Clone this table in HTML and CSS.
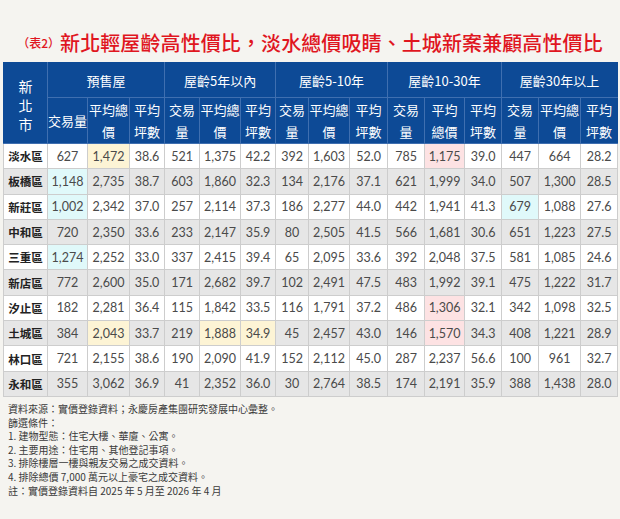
FILE: index.html
```html
<!DOCTYPE html>
<html lang="zh-Hant">
<head>
<meta charset="utf-8">
<link rel="stylesheet" href="styles.css">
</head>
<body>
<div class="page">
  <h1 class="title"><span class="tag">（表2）</span><span class="main">新北輕屋齡高性價比，淡水總價吸睛、土城新案兼顧高性價比</span></h1>
  <table class="grid">
    <colgroup>
      <col class="w44"><col class="w40"><col class="w42"><col class="w35">
      <col class="w35"><col class="w41"><col class="w35">
      <col class="w33"><col class="w41"><col class="w38">
      <col class="w37"><col class="w40"><col class="w37">
      <col class="w37"><col class="w42"><col class="w37">
    </colgroup>
    <thead>
      <tr class="grp">
        <th rowspan="2" class="city">新<br>北<br>市</th>
        <th colspan="3">預售屋</th>
        <th colspan="3">屋齡5年以內</th>
        <th colspan="3">屋齡5-10年</th>
        <th colspan="3">屋齡10-30年</th>
        <th colspan="3">屋齡30年以上</th>
      </tr>
      <tr class="sub">
        <th>交易量</th><th>平均總<br>價</th><th>平均<br>坪數</th>
        <th>交易<br>量</th><th>平均總<br>價</th><th>平均<br>坪數</th>
        <th>交易<br>量</th><th>平均總<br>價</th><th>平均<br>坪數</th>
        <th>交易<br>量</th><th>平均<br>總價</th><th>平均<br>坪數</th>
        <th>交易<br>量</th><th>平均總<br>價</th><th>平均<br>坪數</th>
      </tr>
    </thead>
    <tbody>
      <tr><th>淡水區</th><td>627</td><td class="y">1,472</td><td>38.6</td><td>521</td><td>1,375</td><td>42.2</td><td>392</td><td>1,603</td><td>52.0</td><td>785</td><td class="p">1,175</td><td>39.0</td><td>447</td><td>664</td><td>28.2</td></tr>
      <tr><th>板橋區</th><td class="c">1,148</td><td>2,735</td><td>38.7</td><td>603</td><td>1,860</td><td>32.3</td><td>134</td><td>2,176</td><td>37.1</td><td>621</td><td>1,999</td><td>34.0</td><td>507</td><td>1,300</td><td>28.5</td></tr>
      <tr><th>新莊區</th><td class="c">1,002</td><td>2,342</td><td>37.0</td><td>257</td><td>2,114</td><td>37.3</td><td>186</td><td>2,277</td><td>44.0</td><td>442</td><td>1,941</td><td>41.3</td><td class="c">679</td><td>1,088</td><td>27.6</td></tr>
      <tr><th>中和區</th><td>720</td><td>2,350</td><td>33.6</td><td>233</td><td>2,147</td><td>35.9</td><td>80</td><td>2,505</td><td>41.5</td><td>566</td><td>1,681</td><td>30.6</td><td>651</td><td>1,223</td><td>27.5</td></tr>
      <tr><th>三重區</th><td class="c">1,274</td><td>2,252</td><td>33.0</td><td>337</td><td>2,415</td><td>39.4</td><td>65</td><td>2,095</td><td>33.6</td><td>392</td><td>2,048</td><td>37.5</td><td>581</td><td>1,085</td><td>24.6</td></tr>
      <tr><th>新店區</th><td>772</td><td>2,600</td><td>35.0</td><td>171</td><td>2,682</td><td>39.7</td><td>102</td><td>2,491</td><td>47.5</td><td>483</td><td>1,992</td><td>39.1</td><td>475</td><td>1,222</td><td>31.7</td></tr>
      <tr><th>汐止區</th><td>182</td><td>2,281</td><td>36.4</td><td>115</td><td>1,842</td><td>33.5</td><td>116</td><td>1,791</td><td>37.2</td><td>486</td><td class="p">1,306</td><td>32.1</td><td>342</td><td>1,098</td><td>32.5</td></tr>
      <tr><th>土城區</th><td>384</td><td class="y">2,043</td><td>33.7</td><td>219</td><td class="y">1,888</td><td class="y">34.9</td><td>45</td><td>2,457</td><td>43.0</td><td>146</td><td class="p">1,570</td><td>34.3</td><td>408</td><td>1,221</td><td>28.9</td></tr>
      <tr><th>林口區</th><td>721</td><td>2,155</td><td>38.6</td><td>190</td><td>2,090</td><td>41.9</td><td>152</td><td>2,112</td><td>45.0</td><td>287</td><td>2,237</td><td>56.6</td><td>100</td><td>961</td><td>32.7</td></tr>
      <tr><th>永和區</th><td>355</td><td>3,062</td><td>36.9</td><td>41</td><td>2,352</td><td>36.0</td><td>30</td><td>2,764</td><td>38.5</td><td>174</td><td>2,191</td><td>35.9</td><td>388</td><td>1,438</td><td>28.0</td></tr>
    </tbody>
  </table>
  <div class="notes">
    <p>資料來源：實價登錄資料；永慶房產集團研究發展中心彙整。</p>
    <p>篩選條件：</p>
    <p>1. 建物型態：住宅大樓、華廈、公寓。</p>
    <p>2. 主要用途：住宅用、其他登記事項。</p>
    <p>3. 排除樓層一樓與親友交易之成交資料。</p>
    <p>4. 排除總價 7,000 萬元以上豪宅之成交資料。</p>
    <p>註：實價登錄資料自 2025 年 5 月至 2026 年 4 月</p>
  </div>
</div>
</body>
</html>
```
FILE: styles.css
```css
html, body {
  margin: 0;
  padding: 0;
  background: #f5f4f0;
}
.page {
  width: 620px;
  height: 519px;
  padding: 0 3px;
  box-sizing: border-box;
  font-family: "Noto Sans CJK TC", "Noto Sans", sans-serif;
}
.title {
  margin: 0;
  height: 62px;
  padding-top: 22px;
  box-sizing: border-box;
  display: flex;
  align-items: center;
  justify-content: center;
  color: #e0161f;
  font-weight: 500;
  white-space: nowrap;
}
.title .tag {
  font-size: 12px;
  font-weight: 500;
}
.title .main {
  font-size: 20px;
  letter-spacing: 0.1px;
}
.grid {
  width: 614px;
  table-layout: fixed;
  border-collapse: collapse;
}
.w33 { width: 33px; }
.w35 { width: 35px; }
.w37 { width: 37px; }
.w38 { width: 38px; }
.w40 { width: 40px; }
.w41 { width: 41px; }
.w42 { width: 42px; }
.w44 { width: 44px; }
.grid thead th {
  background: #0d4a96;
  color: #fff;
  font-weight: 400;
  font-size: 13px;
  padding: 0;
  border: 1px solid #3f6fb0;
  white-space: nowrap;
  text-align: center;
}
.grid thead tr:first-child th {
  border-top-color: #0d4a96;
}
.grid thead th:first-child {
  border-left-color: #0d4a96;
}
.grid thead tr.grp th:last-child,
.grid thead tr.sub th:last-child {
  border-right-color: #0d4a96;
}
.grp th {
  height: 34px;
}
.sub th {
  height: 45px;
  line-height: 22px;
}
.grid thead th.city {
  font-size: 14px;
  line-height: 19px;
  padding-top: 4px;
}
.grid tbody th,
.grid tbody td {
  height: 24.3px;
  padding: 0;
  border: 1px solid #cdcdcd;
  text-align: center;
  white-space: nowrap;
}
.grid tbody th {
  font-size: 11.5px;
  font-weight: 700;
  color: #222;
}
.grid tbody td {
  font-family: "Lato", "Noto Sans", sans-serif;
  font-size: 12.5px;
  color: #4a4a4a;
}
.grid tbody tr:nth-child(odd) { background: #ffffff; }
.grid tbody tr:nth-child(even) { background: #e6e6e6; }
.grid tbody td.y { background: #fdf4d5; }
.grid tbody td.c { background: #e0f9fa; }
.grid tbody td.p { background: #fde2e3; }
.notes {
  padding: 5px 0 0 5px;
  font-size: 10px;
  line-height: 13.6px;
  color: #3a3a3a;
}
.notes p {
  margin: 0;
}
```
